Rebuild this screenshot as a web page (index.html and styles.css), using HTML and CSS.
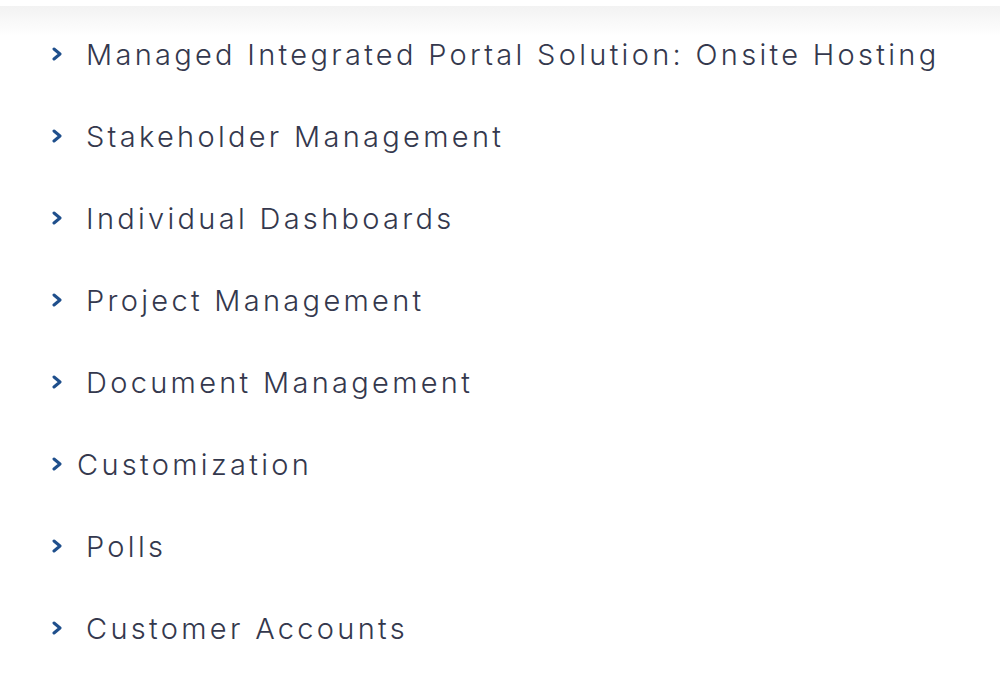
FILE: index.html
```html
<!DOCTYPE html>
<html>
<head>
<meta charset="utf-8">
<link rel="stylesheet" href="styles.css">
</head>
<body>
<ul class="features">
  <li class="item"><svg class="chev" viewBox="0 0 12 14"><path d="M3 2l6 5-6 5"/></svg><span class="label">Managed Integrated Portal Solution: Onsite Hosting</span></li>
  <li class="item"><svg class="chev" viewBox="0 0 12 14"><path d="M3 2l6 5-6 5"/></svg><span class="label">Stakeholder Management</span></li>
  <li class="item"><svg class="chev" viewBox="0 0 12 14"><path d="M3 2l6 5-6 5"/></svg><span class="label">Individual Dashboards</span></li>
  <li class="item"><svg class="chev" viewBox="0 0 12 14"><path d="M3 2l6 5-6 5"/></svg><span class="label">Project Management</span></li>
  <li class="item"><svg class="chev" viewBox="0 0 12 14"><path d="M3 2l6 5-6 5"/></svg><span class="label">Document Management</span></li>
  <li class="item tight"><svg class="chev" viewBox="0 0 12 14"><path d="M3 2l6 5-6 5"/></svg><span class="label">Customization</span></li>
  <li class="item"><svg class="chev" viewBox="0 0 12 14"><path d="M3 2l6 5-6 5"/></svg><span class="label">Polls</span></li>
  <li class="item"><svg class="chev" viewBox="0 0 12 14"><path d="M3 2l6 5-6 5"/></svg><span class="label">Customer Accounts</span></li>
</ul>
</body>
</html>
```
FILE: styles.css
```css
html, body {
  margin: 0;
  padding: 0;
}
body {
  width: 1000px;
  height: 676px;
  overflow: hidden;
  background: #fff linear-gradient(#fff 0, #fff 6px, #f2f2f2 6px, #fff 36px) no-repeat;
  background-size: 100% 36px;
  font-family: Inter, "DejaVu Sans", sans-serif;
  color: #34384d;
}
.features {
  list-style: none;
  margin: 0;
  padding: 13px 0 0 51px;
}
.item {
  display: flex;
  align-items: center;
  height: 82px;
}
.chev {
  width: 12px;
  height: 14px;
  flex: none;
  margin-right: 23px;
}
.chev path {
  fill: none;
  stroke: #1f4f8c;
  stroke-width: 3;
  stroke-linecap: round;
  stroke-linejoin: round;
}
.item.tight .chev {
  margin-right: 14px;
}
.label {
  font-size: 29px;
  font-weight: 300;
  letter-spacing: 3.3px;
  line-height: 1;
}
```
